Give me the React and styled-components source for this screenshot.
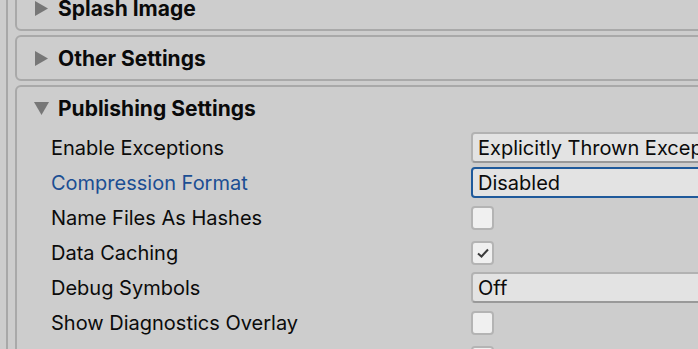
import styled, { createGlobalStyle } from "styled-components";

const GlobalStyle = createGlobalStyle`
  html, body {
    margin: 0;
    padding: 0;
    background: #cdcdcd;
    overflow: hidden;
  }
  body {
    font-family: Inter, "Noto Sans", sans-serif;
    color: #0b0b0b;
  }
`;

const sections = [
  { title: "Splash Image", open: false },
  { title: "Other Settings", open: false },
  { title: "Publishing Settings", open: true },
];

const fields = [
  { label: "Enable Exceptions", type: "select", value: "Explicitly Thrown Exceptions Only" },
  { label: "Compression Format", type: "select", value: "Disabled", focused: true },
  { label: "Name Files As Hashes", type: "check", value: false },
  { label: "Data Caching", type: "check", value: true },
  { label: "Debug Symbols", type: "select", value: "Off" },
  { label: "Show Diagnostics Overlay", type: "check", value: false },
  { label: "Decompression Fallback", type: "check", value: false },
];

function Arrow({ open }) {
  return (
    <ArrowIcon width="15" height="15" viewBox="0 0 15 15">
      {open ? (
        <polygon points="0,1 15,1 7.5,14" fill="#777" />
      ) : (
        <polygon points="1,0 14,7.5 1,15" fill="#777" />
      )}
    </ArrowIcon>
  );
}

function Check() {
  return (
    <svg width="14" height="12" viewBox="0 0 14 12">
      <path d="M2 6.5 L5.5 9.5 L12 2.5" fill="none" stroke="#3a3a3a" strokeWidth="2" />
    </svg>
  );
}

function Field({ field }) {
  return (
    <Row>
      <Label $focused={field.focused}>{field.label}</Label>
      <Control>
        {field.type === "select" ? (
          <Dropdown $focused={field.focused}>{field.value}</Dropdown>
        ) : (
          <Checkbox>{field.value && <Check />}</Checkbox>
        )}
      </Control>
    </Row>
  );
}

export default function App() {
  return (
    <>
      <GlobalStyle />
      <Page>
        <Rail />
        <Stack>
          {sections.map((s) => (
            <Card key={s.title}>
              <Header>
                <Arrow open={s.open} />
                <Title>{s.title}</Title>
              </Header>
              {s.open && (
                <Body>
                  {fields.map((f) => (
                    <Field key={f.label} field={f} />
                  ))}
                </Body>
              )}
            </Card>
          ))}
        </Stack>
      </Page>
    </>
  );
}

const Page = styled.div`
  display: flex;
  height: 349px;
  overflow: hidden;
  padding-left: 6px;
`;

const Rail = styled.div`
  width: 2px;
  flex: none;
  background: #a8a8a8;
`;

const Stack = styled.div`
  display: flex;
  flex-direction: column;
  gap: 4px;
  margin-left: 7px;
  margin-top: -15px;
  width: 740px;
  flex: none;
`;

const Card = styled.section`
  border: 2px solid #a9a9a9;
  border-radius: 6px;
`;

const Header = styled.div`
  height: 42px;
  display: flex;
  align-items: center;
  padding-left: 17px;
  gap: 9px;
`;

const ArrowIcon = styled.svg`
  flex: none;
`;

const Title = styled.span`
  font-size: 21px;
  font-weight: 700;
  color: #0a0a0a;
`;

const Body = styled.div`
  padding-top: 1px;
  display: flex;
  flex-direction: column;
`;

const Row = styled.div`
  height: 35px;
  display: grid;
  grid-template-columns: 454px 1fr;
  align-items: center;
`;

const Label = styled.span`
  padding-left: 34px;
  font-size: 20px;
  color: ${(p) => (p.$focused ? "#1b4e93" : "#0b0b0b")};
  white-space: nowrap;
`;

const Control = styled.div`
  display: flex;
  align-items: center;
`;

const Dropdown = styled.div`
  box-sizing: border-box;
  width: 100%;
  height: 31px;
  display: flex;
  align-items: center;
  padding-left: 5px;
  font-size: 20px;
  white-space: nowrap;
  overflow: hidden;
  background: #e3e3e3;
  border-radius: 4px;
  border: 2px solid ${(p) => (p.$focused ? "#1f5a9b" : "#b2b2b2")};
  border-bottom-color: ${(p) => (p.$focused ? "#1f5a9b" : "#999")};
`;

const Checkbox = styled.div`
  box-sizing: border-box;
  width: 23px;
  height: 24px;
  display: flex;
  align-items: center;
  justify-content: center;
  background: #f0f0f0;
  border: 2px solid #b4b4b4;
  border-radius: 4px;
`;
